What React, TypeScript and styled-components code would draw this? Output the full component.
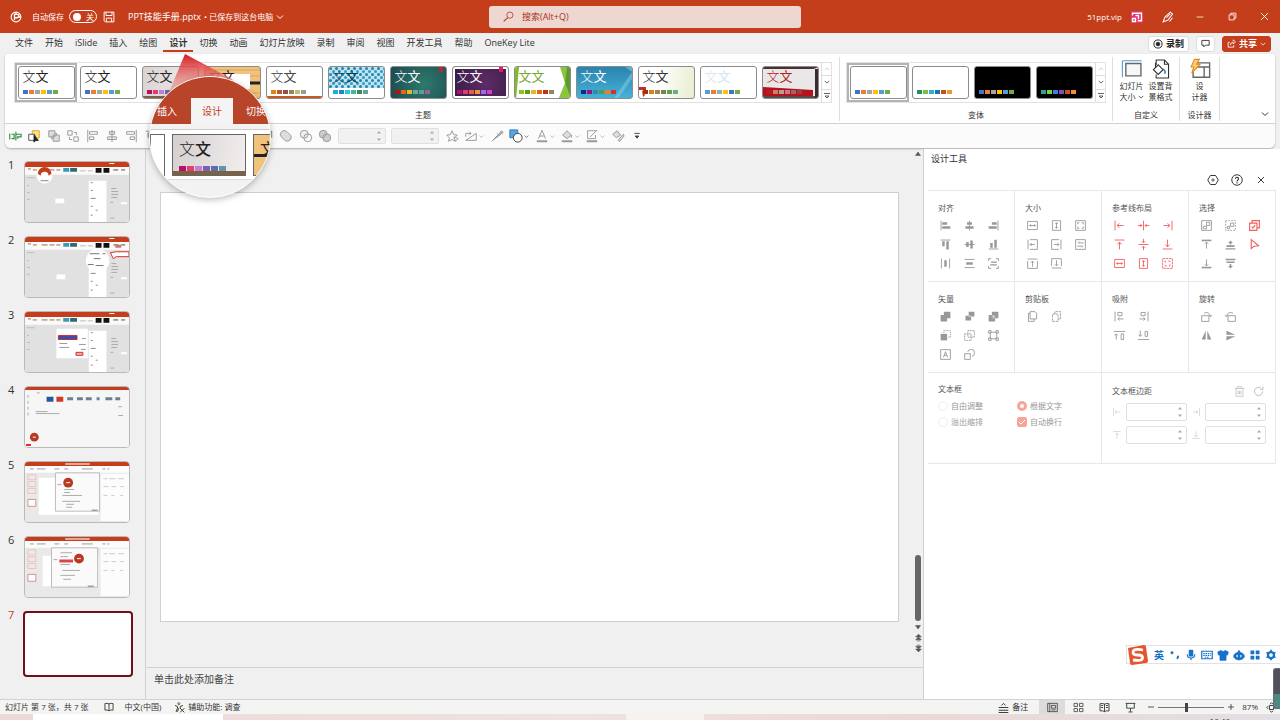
import React, { ReactNode } from "react";
import styled, { createGlobalStyle } from "styled-components";

const brand = "#c43e1c";
const line = "#d2d2d2";

const GlobalStyle = createGlobalStyle`
  * { box-sizing: border-box; }
  body {
    margin: 0;
    background: #f0f0f0;
    color: #333;
    font: 8px/10px "Open Sans", "Noto Sans CJK SC", sans-serif;
  }
  button, input {
    font: inherit;
    color: inherit;
    margin: 0;
    padding: 0;
    border: 0;
    background: none;
  }
  svg { display: block; flex: none; }
`;

const Glyph = ({ size = 14, children }: { size?: number; children: ReactNode }) => (
  <svg width={size} height={size} viewBox="0 0 16 16" fill="none" stroke="currentColor" strokeWidth="1.1" aria-hidden="true">
    {children}
  </svg>
);

const Caret = ({ size = 8 }: { size?: number }) => (
  <Glyph size={size}><path d="M2 5l6 6 6-6" strokeWidth="2" /></Glyph>
);

/* ---------- Window frame ---------- */

const Window = styled.div`
  display: flex;
  flex-direction: column;
  height: 100vh;
  overflow: hidden;
  position: relative;
`;

const TitleBar = styled.header`
  display: grid;
  grid-template-columns: 1fr 312px 1fr;
  align-items: center;
  flex: 0 0 33px;
  padding-left: 10px;
  background: ${brand};
  color: #fff;
`;

const TitleSide = styled.div<{ $end?: boolean }>`
  display: flex;
  align-items: center;
  justify-content: ${(p) => (p.$end ? "flex-end" : "flex-start")};
  height: 33px;
  white-space: nowrap;
`;

const SaveSwitch = styled.label`
  display: flex;
  align-items: center;
  gap: 5px;
  margin: 0 6px 0 10px;
`;

const Toggle = styled.span`
  display: flex;
  align-items: center;
  gap: 5px;
  position: relative;
  width: 28px;
  height: 13px;
  padding-left: 3px;
  border: 1px solid #fff;
  border-radius: 7px;
  &::before {
    content: "";
    width: 8px;
    height: 8px;
    border-radius: 50%;
    background: #fff;
  }
  input {
    position: absolute;
    inset: 0;
    opacity: 0;
  }
`;

const DocName = styled.button`
  display: flex;
  align-items: center;
  gap: 3px;
  margin-left: 13px;
`;

const DocFile = styled.span`
  font-size: 9px;
`;

const SearchBox = styled.label`
  display: flex;
  align-items: center;
  gap: 8px;
  height: 22px;
  padding-left: 14px;
  border-radius: 3px;
  background: #efd7d1;
  color: #a5341b;
  input {
    flex: 1;
    font-size: 9px;
    outline: none;
  }
  input::placeholder { color: #a5341b; opacity: 1; }
`;

const UserName = styled.span`
  margin-right: 9px;
  font-size: 8px;
`;

const FrameButton = styled.button`
  display: grid;
  place-items: center;
  width: 32px;
  height: 33px;
`;

const Avatar = styled.span`
  display: grid;
  place-items: center;
  width: 12px;
  height: 12px;
  margin-right: 9px;
  background: #e2336b;
`;

/* ---------- Tabs ---------- */

const TabRow = styled.nav`
  display: flex;
  align-items: center;
  flex: 0 0 21px;
  padding: 0 9px;
  font-size: 9px;
`;

const Tab = styled.button<{ $active?: boolean }>`
  height: 17px;
  padding: 1px 6px 0;
  font-size: 9px;
  white-space: nowrap;
  font-weight: ${(p) => (p.$active ? 700 : 400)};
  border-bottom: 2px solid ${(p) => (p.$active ? brand : "transparent")};
`;

const TabActions = styled.div`
  display: flex;
  gap: 7px;
  margin-left: auto;
`;

const ActionButton = styled.button<{ $primary?: boolean }>`
  display: flex;
  align-items: center;
  gap: 3px;
  height: 16px;
  padding: 0 4px;
  border: 1px solid ${(p) => (p.$primary ? brand : "#ddd")};
  border-radius: 3px;
  background: ${(p) => (p.$primary ? brand : "#fff")};
  color: ${(p) => (p.$primary ? "#fff" : "#222")};
  font-size: 9px;
  font-weight: 700;
`;

/* ---------- Ribbon ---------- */

const RibbonCard = styled.section`
  flex: none;
  margin: 0 5px;
  border-radius: 4px 4px 6px 6px;
  background: #fff;
  box-shadow: 0 1px 2px rgba(0, 0, 0, 0.3);
  overflow: hidden;
`;

const RibbonGroups = styled.div`
  display: flex;
  height: 70px;
  padding: 3px 0 2px 9px;
  border-bottom: 1px solid ${line};
`;

const Group = styled.div<{ $pad?: number }>`
  display: flex;
  flex-direction: column;
  justify-content: space-between;
  align-items: center;
  padding: 0 ${(p) => p.$pad ?? 6}px;
  border-right: 1px solid #dedede;
`;

const GroupName = styled.span`
  line-height: 12px;
`;

const Gallery = styled.div`
  display: flex;
  height: 41px;
  margin-top: 5px;
  border: 1px solid #e2e2e2;
`;

const ThemeCell = styled.button<{ $selected?: boolean }>`
  display: grid;
  place-items: center;
  width: 62px;
  height: 39px;
  border: 2px solid ${(p) => (p.$selected ? "#b3b3b3" : "transparent")};
`;

const ThemeCard = styled.span<{ $bg: string; $ink: string }>`
  display: flex;
  flex-direction: column;
  justify-content: space-between;
  align-items: flex-start;
  position: relative;
  width: 57px;
  height: 33px;
  padding: 2px 0 4px 4px;
  border: 1px solid #8c8c8c;
  border-radius: 3px;
  overflow: hidden;
  background: ${(p) => p.$bg};
  color: ${(p) => p.$ink};
  font-size: 13px;
  line-height: 15px;
  font-weight: 300;
  svg {
    position: absolute;
    inset: 0;
  }
`;

const Sample = styled.span`
  position: relative;
  height: 15px;
`;

const Swatches = styled.span`
  display: flex;
  gap: 1px;
  position: relative;
  i {
    width: 5px;
    height: 4px;
  }
`;

const Pager = styled.div`
  display: flex;
  flex-direction: column;
  width: 10px;
  border-left: 1px solid #ddd;
  button {
    flex: 1;
    display: grid;
    place-items: center;
  }
  button + button { border-top: 1px solid #ddd; }
`;

const BigButton = styled.button`
  display: flex;
  flex-direction: column;
  align-items: center;
  gap: 1px;
  width: 29px;
  span {
    display: flex;
    align-items: center;
    gap: 2px;
  }
`;

const BigRow = styled.div`
  display: flex;
  padding-top: 1px;
`;

const Collapse = styled.button`
  margin: auto 6px 3px auto;
`;

const QuickBar = styled.div`
  display: flex;
  align-items: center;
  height: 24px;
  padding-left: 3px;
  background: #fbfbfb;
  color: #9a9a9a;
`;

const QuickGroup = styled.div<{ $width: number }>`
  display: flex;
  align-items: center;
  justify-content: space-between;
  width: ${(p) => p.$width}px;
`;

const QuickButton = styled.button<{ $dark?: boolean }>`
  display: flex;
  align-items: center;
  gap: 1px;
  color: ${(p) => (p.$dark ? "#444" : "inherit")};
`;

const SpinBox = styled.span<{ $width: number; $height: number; $fill?: string }>`
  display: flex;
  align-items: center;
  width: ${(p) => p.$width}px;
  height: ${(p) => p.$height}px;
  padding-right: 3px;
  border: 1px solid #e0e0e0;
  border-radius: 2px;
  background: ${(p) => p.$fill ?? "#fff"};
  color: #aaa;
  input {
    flex: 1;
    min-width: 0;
  }
`;

const QuickSpins = styled.div`
  display: flex;
  gap: 5px;
  margin: 0 6px;
`;

/* ---------- Lens over the ribbon ---------- */

const Pointer = styled.svg`
  position: absolute;
  left: 160px;
  top: 54px;
`;

const Lens = styled.div`
  position: absolute;
  left: 149px;
  top: 76px;
  width: 122px;
  height: 122px;
  border: 1px solid #fff;
  border-radius: 50%;
  background: #f2f2f2;
  overflow: hidden;
  box-shadow: 0 2px 6px rgba(0, 0, 0, 0.25);
`;

const LensTabs = styled.div`
  display: flex;
  align-items: flex-end;
  height: 47px;
  background: #b8442a;
  color: #fff;
  font-size: 10px;
  line-height: 26px;
  white-space: nowrap;
  span {
    flex: none;
    width: 41px;
    text-align: center;
  }
  span:first-child { padding-right: 7px; }
  span:nth-child(2) { width: 42px; background: #f4f4f4; color: ${brand}; }
  span:last-child { padding-left: 5px; }
`;

const LensGallery = styled.div`
  display: flex;
  gap: 7px;
  height: 51px;
  margin-top: 5px;
  padding-top: 4px;
  border-top: 1px solid #ccc;
  border-bottom: 1px solid #ddd;
  background: #fff;
`;

const LensCard = styled.div<{ $width: number; $bg: string }>`
  display: flex;
  flex-direction: column;
  justify-content: space-between;
  flex: none;
  width: ${(p) => p.$width}px;
  height: 42px;
  padding: 4px 0 0 6px;
  border: 1px solid #666;
  background: ${(p) => p.$bg};
  color: #222;
  font-size: 16px;
  line-height: 20px;
  font-weight: 300;
  overflow: hidden;
`;

const LensSwatches = styled.div`
  display: flex;
  gap: 1px;
  margin-bottom: 4px;
  i { width: 7px; height: 5px; }
`;

/* ---------- Workspace ---------- */

const Workspace = styled.main`
  display: flex;
  flex: 1;
  min-height: 0;
  margin-top: 1px;
`;

const Thumbs = styled.aside`
  flex: 0 0 146px;
  padding: 12px 0 0 8px;
  border-right: 1px solid ${line};
  ol {
    display: flex;
    flex-direction: column;
    gap: 13px;
    margin: 0;
    padding: 0;
    list-style: none;
  }
`;

const ThumbItem = styled.li<{ $selected?: boolean }>`
  display: flex;
  height: 62px;
  font-size: 11px;
  color: ${(p) => (p.$selected ? brand : "#333")};
  > span { width: 16px; line-height: 7px; }
`;

const ThumbFrame = styled.button<{ $selected?: boolean }>`
  width: ${(p) => (p.$selected ? 110 : 106)}px;
  height: ${(p) => (p.$selected ? 66 : 62)}px;
  margin-left: ${(p) => (p.$selected ? -1 : 0)}px;
  border: ${(p) => (p.$selected ? "2px solid #711019" : "1px solid #b9b9b9")};
  border-radius: 4px;
  background: #fff;
  overflow: hidden;
`;

const Editor = styled.section`
  display: flex;
  flex-direction: column;
  flex: 1;
  min-width: 0;
`;

const Stage = styled.div`
  display: flex;
  flex: 1;
  min-height: 0;
`;

const Slide = styled.div`
  flex: 1;
  margin: 43px 14px 45px;
  border: 1px solid #cfcfcf;
  background: #fff;
`;

const ScrollTrack = styled.div`
  display: flex;
  flex-direction: column;
  align-items: center;
  justify-content: space-between;
  width: 10px;
  padding: 1px 0 14px;
  color: #555;
  > div {
    display: flex;
    flex-direction: column;
    align-items: center;
    gap: 2px;
  }
  button { display: block; }
`;

const ScrollThumb = styled.i`
  width: 6px;
  height: 66px;
  border-radius: 3px;
  background: #666;
`;

const Notes = styled.div`
  flex: 0 0 32px;
  padding: 4px 8px;
  border-top: 1px solid ${line};
  font-size: 10px;
  line-height: 14px;
  color: #444;
`;

/* ---------- Design pane ---------- */

const Pane = styled.aside`
  flex: 0 0 357px;
  padding: 0 4px;
  border-left: 1px solid ${line};
  background: #fff;
`;

const PaneTitle = styled.h2`
  margin: 0;
  padding: 4px 3px;
  font-size: 9px;
  line-height: 12px;
  font-weight: 400;
`;

const PaneActions = styled.div`
  display: flex;
  justify-content: flex-end;
  align-items: center;
  gap: 12px;
  height: 21px;
  padding-right: 9px;
  color: #333;
`;

const ToolGrid = styled.div`
  display: grid;
  grid-template-columns: repeat(4, 1fr);
  grid-auto-rows: 91px;
  border-top: 1px solid #e8e8e8;
`;

const ToolCell = styled.section<{ $wide?: boolean }>`
  grid-column: span ${(p) => (p.$wide ? 2 : 1)};
  padding: ${(p) => (p.$wide ? 10 : 11)}px 0 0 10px;
  border-right: 1px solid #e8e8e8;
  border-bottom: 1px solid #e8e8e8;
  h3 {
    margin: 0;
    font-size: 8px;
    line-height: 12px;
    font-weight: 400;
    color: #555;
  }
`;

const IconGrid = styled.div`
  display: grid;
  grid-template-columns: repeat(3, 14px);
  gap: 7px 10px;
  margin-top: 5px;
`;

const ToolButton = styled.button<{ $tone: string }>`
  display: grid;
  place-items: center;
  width: 14px;
  height: 12px;
  color: ${(p) => p.$tone};
`;

const Options = styled.div`
  display: grid;
  grid-template-columns: 79px 79px;
  gap: 6px 0;
  margin-top: 6px;
  label {
    display: flex;
    align-items: center;
    gap: 3px;
    color: #999;
  }
`;

const Choice = styled.input<{ $square?: boolean }>`
  appearance: none;
  width: 10px;
  height: 10px;
  border: 1px solid #eee;
  border-radius: ${(p) => (p.$square ? 2 : 5)}px;
  &[type="radio"]:checked { border: 3px solid #f7a59b; }
  &[type="checkbox"]:checked {
    border-color: #f7a59b;
    background: #f7a59b url("data:image/svg+xml,%3Csvg xmlns='http://www.w3.org/2000/svg' viewBox='0 0 8 8'%3E%3Cpath d='M1 4l2 2 4-4' fill='none' stroke='white'/%3E%3C/svg%3E") center / 8px no-repeat;
  }
`;

const MarginHead = styled.div`
  display: flex;
  align-items: center;
  gap: 8px;
  padding: 2px 11px 0 0;
  color: #bbb;
  h3 { margin-right: auto; }
`;

const Margins = styled.div`
  display: grid;
  grid-template-columns: 61px 61px;
  gap: 5px 18px;
  margin: 6px 0 0 14px;
  label {
    display: flex;
    align-items: center;
    gap: 4px;
    margin-left: -14px;
    color: #ccc;
  }
`;

/* ---------- Status bar ---------- */

const StatusBar = styled.footer`
  display: flex;
  align-items: center;
  flex: 0 0 15px;
  padding-left: 5px;
  border-top: 1px solid ${line};
  background: #f4f4f3;
  white-space: nowrap;
`;

const StatusItem = styled.button<{ $gap: number }>`
  display: flex;
  align-items: center;
  gap: 3px;
  margin-left: ${(p) => p.$gap}px;
`;

const StatusTools = styled.div`
  display: flex;
  align-items: center;
  margin-left: auto;
  padding-right: 3px;
`;

const ViewButton = styled.button<{ $active?: boolean }>`
  display: grid;
  place-items: center;
  width: 26px;
  height: 14px;
  margin-left: ${(p) => (p.$active ? 11 : 0)}px;
  background: ${(p) => (p.$active ? "#dcdcdc" : "none")};
`;

const Zoom = styled.input`
  appearance: none;
  width: 66px;
  height: 10px;
  margin: 0 3px;
  background: linear-gradient(#777, #777) center / 100% 1px no-repeat;
  &::-webkit-slider-thumb {
    appearance: none;
    width: 3px;
    height: 9px;
    background: #444;
  }
`;

const Desktop = styled.div`
  display: flex;
  flex: 0 0 6px;
  padding-left: 33px;
  overflow: hidden;
  background: linear-gradient(90deg, #ecd9d8, #efe2e0 45%, #ecd8d6 70%, #e2dfe2);
`;

const DesktopBand = styled.i<{ $width: number; $tone: string; $gap?: number }>`
  width: ${(p) => p.$width}px;
  margin-right: ${(p) => p.$gap ?? 0}px;
  background: ${(p) => p.$tone};
`;

const Clock = styled.time`
  margin-left: auto;
  padding: 2px 50px 0 0;
  color: #222;
`;

const ImeBar = styled.div`
  display: flex;
  align-items: center;
  gap: 4px;
  position: absolute;
  right: 0;
  bottom: 56px;
  height: 19px;
  padding: 0 3px 0 0;
  background: #fff;
  border: 1px solid #e2e2e2;
  border-right: 0;
  color: #1571c9;
  font-size: 10px;
  font-weight: 700;
  button {
    display: grid;
    place-items: center;
    width: 12px;
  }
`;

const SideWidget = styled.div`
  position: absolute;
  right: 0;
  bottom: 11px;
  width: 7px;
  height: 41px;
  border: 1px solid #6a6a78;
  border-right: 0;
  border-radius: 3px 0 0 3px;
  background: linear-gradient(#50505e 65%, #4f8a80 65%);
`;

/* ---------- Data ---------- */

type Theme = { bg: string; ink: string; colors: string[]; art?: ReactNode; bold?: boolean };

const office = ["#4472c4", "#ed7d31", "#a5a5a5", "#ffc000", "#5b9bd5", "#70ad47"];

const themes: Theme[] = [
  { bg: "#fff", ink: "#222", colors: office },
  { bg: "#fff", ink: "#222", colors: office },
  {
    bg: "linear-gradient(100deg,#d9d3d2,#f1eeee)", ink: "#222",
    colors: ["#b31166", "#e33d6f", "#c77cd8", "#7a5fb5", "#5a6fb0", "#5d97a9"],
    art: <path d="M0 29H57V33H0Z" fill="#806044" />,
  },
  {
    bg: "#f0c27c", ink: "#222", colors: ["#e8a33d", "#c76b2a", "#8a8a4a"],
    art: <><path d="M0 3h57M0 9h57M0 26h57" stroke="#dba75b" /><path d="M9 7H45V22H9Z" fill="#fff" /><path d="M2 17h8M45 16h12" stroke="#222" strokeWidth="3" /></>,
  },
  {
    bg: "#fff", ink: "#444", colors: ["#e48312", "#bd582c", "#865640", "#9b8357", "#c2bc80", "#94a088"],
    art: <path d="M0 29H57V31H0Z" fill="#c55a2b" />,
  },
  {
    bg: "#fff", ink: "#143c52", colors: ["#1cade4", "#2683c6", "#27ced7", "#42ba97", "#3e8853", "#62a39f"],
    art: <>
      <defs><pattern id="dots" width="6" height="6" patternUnits="userSpaceOnUse"><rect width="6" height="6" fill="#bfe3f1" /><circle cx="1.500" cy="1.500" r="1.500" fill="#1f86ac" /><circle cx="4.500" cy="4.500" r="1.500" fill="#2e9cc4" /></pattern></defs>
      <path d="M0 0H57V21H0Z" fill="url(#dots)" />
    </>,
  },
  {
    bg: "radial-gradient(circle at 60% 55%,#2d7a6c,#1c4a50)", ink: "#fff",
    colors: ["#b01513", "#ea6312", "#e6b729", "#6aac90", "#5f9c9d", "#9e5e9b"],
    art: <path d="M48 0H52V5H48Z" fill="#c5202b" />,
  },
  {
    bg: "radial-gradient(circle at 60% 55%,#5e2c66,#341a44)", ink: "#fff",
    colors: ["#b31166", "#e33d6f", "#e45f3c", "#e9943a", "#9b6bf2", "#d53dd0"],
    art: <><path d="M0 0H55V31H0Z" fill="none" stroke="#fff" strokeWidth="4" /><path d="M46 0H50V5H46Z" fill="#e8175d" /></>,
  },
  {
    bg: "#fff", ink: "#76a82c", bold: true, colors: ["#90c226", "#54a021", "#e6b91e", "#e76618", "#c42f1a", "#918655"],
    art: <><path d="M0 0L4 0L1 33H0Z" fill="#82bb2c" /><path d="M45 0H57V33H43L50 16Z" fill="#8cc43f" /><path d="M57 0V33L50 16L52 0Z" fill="#5d9a2f" /></>,
  },
  {
    bg: "linear-gradient(#2a83b0,#45b3d6)", ink: "#fff", colors: ["#052f8a", "#a50e82", "#2a8bb5", "#4e9a5a", "#e88120", "#d6302b"],
    art: <><path d="M57 2L36 33H40L57 9Z" fill="#8bd0e6" opacity=".5" /><path d="M48 0L57 6V0Z" fill="#9bd9ea" opacity=".5" /></>,
  },
  {
    bg: "linear-gradient(100deg,#fff 35%,#e9edcf)", ink: "#333", colors: ["#a53010", "#de7e18", "#9f8351", "#728653", "#6b9a54", "#6aac90"],
    art: <path d="M0 20H7V23H0ZM3 23L6 28 4 30Z" fill="#c0301c" />,
  },
  { bg: "#fff", ink: "#cfe4f2", colors: ["#5b9bd5", "#ed7d31", "#8fb2a8", "#ffc000", "#4472c4", "#70ad47"] },
  {
    bg: "#e9e7e8", ink: "#b31f24", colors: ["#b31f24", "#c9806a", "#b8a08e", "#c27a89", "#9f6470", "#a23c3c"],
    art: <><path d="M52 2H57V33H52Z" fill="#3b2b2b" /><path d="M0 20L50 23V29H0Z" fill="#b5121b" /><path d="M0 29H52V33H0Z" fill="#5c4a48" /><path d="M0 0H57L50 2H0Z" fill="#4a3030" /></>,
  },
];

const variants: Theme[] = [
  { bg: "#fff", ink: "#fff", colors: office },
  { bg: "#fff", ink: "#fff", colors: ["#1f8f6b", "#7bc043", "#2db3c7", "#1f6fae", "#c0521c", "#f0953a"] },
  { bg: "#000", ink: "#000", colors: office },
  { bg: "#000", ink: "#000", colors: ["#2fa38c", "#74d13f", "#3f7fd6", "#7a4fc0", "#cf4a26", "#f0903a"] },
];

const ThemeThumb = ({ theme, selected, sample }: { theme: Theme; selected?: boolean; sample?: boolean }) => (
  <ThemeCell $selected={selected}>
    <ThemeCard $bg={theme.bg} $ink={theme.ink}>
      {theme.art && <svg width="57" height="33" viewBox="0 0 57 33">{theme.art}</svg>}
      <Sample>{sample && (theme.bold ? <b>文文</b> : <>文<span style={{ fontWeight: 400 }}>文</span></>)}</Sample>
      <Swatches>{theme.colors.map((c) => <i key={c} style={{ background: c }} />)}</Swatches>
    </ThemeCard>
  </ThemeCell>
);

const GalleryPager = () => (
  <Pager>
    <button aria-label="上一行"><Glyph size={6}><path d="M3 10l5-5 5 5" stroke="#bbb" strokeWidth="2" /></Glyph></button>
    <button aria-label="下一行"><Caret size={6} /></button>
    <button aria-label="更多"><Glyph size={8}><path d="M2 3h12M4 8h8l-4 4z" strokeWidth="1.500" /></Glyph></button>
  </Pager>
);

const Spin = ({ width, height, fill, label }: { width: number; height: number; fill?: string; label: string }) => (
  <SpinBox $width={width} $height={height} $fill={fill}>
    <input type="text" aria-label={label} disabled />
    <svg width="6" height="12" viewBox="0 0 6 12" fill="currentColor"><path d="M1 3.500L3 1 5 3.500zM1 8.500L3 11 5 8.500z" /></svg>
  </SpinBox>
);

/* Tool glyphs, each on a 16 unit square */
const F = "currentColor";
const box = <path d="M2 2H14V14H2Z" />;
const g: Record<string, ReactNode> = {
  left: <><path d="M2.500 2V14" /><path d="M4 4H10V7H4ZM4 9H14V12H4Z" fill={F} stroke="none" /></>,
  center: <path d="M5 4H11V7H5ZM3 9H13V12H3ZM7.500 2H8.500V14H7.500Z" fill={F} stroke="none" />,
  right: <><path d="M13.500 2V14" /><path d="M6 4H12V7H6ZM2 9H12V12H2Z" fill={F} stroke="none" /></>,
  top: <><path d="M2 2.500H14" /><path d="M4 4H7V10H4ZM9 4H12V14H9Z" fill={F} stroke="none" /></>,
  middle: <path d="M4 5H7V11H4ZM9 3H12V13H9ZM2 7.500H14V8.500H2Z" fill={F} stroke="none" />,
  bottom: <><path d="M2 13.500H14" /><path d="M4 6H7V12H4ZM9 2H12V12H9Z" fill={F} stroke="none" /></>,
  distH: <><path d="M3 2V14M13 2V14" /><path d="M6.500 4H9.500V12H6.500Z" fill={F} stroke="none" /></>,
  distV: <><path d="M2 3H14M2 13H14" /><path d="M4 6.500H12V9.500H4Z" fill={F} stroke="none" /></>,
  distB: <><path d="M2 5V2H5M11 2H14V5M14 11V14H11M5 14H2V11" /><path d="M5 5.500H12V7H5ZM4 9H12V10.500H4Z" fill={F} stroke="none" /></>,
  wide: <path d="M2 3H14V13H2ZM4.500 8H11.500M6 6.500L4.500 8 6 9.500M10 6.500L11.500 8 10 9.500" />,
  tall: <path d="M3 2H13V14H3ZM8 4.500V11.500M6.500 6L8 4.500 9.500 6M6.500 10L8 11.500 9.500 10" />,
  full: <>{box}<path d="M4.500 6.500V4.500H6.500M9.500 4.500H11.500V6.500M11.500 9.500V11.500H9.500M6.500 11.500H4.500V9.500" /></>,
  growL: <path d="M5 2H14V14H5M2.500 2V14M5 8H11M7 6L5 8 7 10" />,
  growR: <path d="M11 2H2V14H11M13.500 2V14M5 8H11M9 6L11 8 9 10" />,
  swap: <>{box}<path d="M12 6H5L6.500 4.500M4 10H11L9.500 11.500" /></>,
  growT: <path d="M2 5V14H14V5M2 2.500H14M8 5V12M6 7L8 5 10 7" />,
  growB: <path d="M2 11V2H14V11M2 13.500H14M8 4V11M6 9L8 11 10 9" />,
  gl: <path d="M2.500 2V14M5 8H13M8 5.500L5 8 8 10.500" />,
  gc: <path d="M8 2V14M1 8H6M10 8H15M4 6L6 8 4 10M12 6L10 8 12 10" />,
  gr: <path d="M13.500 2V14M3 8H11M8 5.500L11 8 8 10.500" />,
  gt: <path d="M2 2.500H14M8 5V14M5.500 8L8 5 10.500 8" />,
  gm: <path d="M2 8H14M8 1V6M8 10V15M6 4L8 6 10 4M6 12L8 10 10 12" />,
  gb: <path d="M2 13.500H14M8 2V11M5.500 8L8 11 10.500 8" />,
  corners: <path d="M2 2H14V14H2ZM5 7V5H7M9 5H11V7M11 9V11H9M7 11H5V9" strokeDasharray="3 1" />,
  selA: <>{box}<path d="M8 4H12V8H8ZM4 9H8V12H4Z" /></>,
  selB: <><path d="M2 2H14V14H2Z" strokeDasharray="2 1.500" /><path d="M8 5H12V9H8ZM4 9H7V12H4Z" /></>,
  selC: <path d="M2 5H11V14H2ZM5 5V2H14V11H11M4.500 9.500L6 11 9 7.500" strokeWidth="1.400" />,
  front: <><path d="M2 3H14" strokeWidth="2" /><path d="M8 5V13M6 7L8 5 10 7" /></>,
  up: <path d="M3 9H13V11H3ZM2 12.500H14V14H2ZM8 3L11 6H9V8H7V6H5Z" fill={F} stroke="none" />,
  cursor: <path d="M4 2V13L7 10.500 13 9.500Z" strokeWidth="1.400" />,
  back: <><path d="M2 13H14" strokeWidth="2" /><path d="M8 3V11M6 9L8 11 10 9" /></>,
  down: <path d="M2 2H14V4H2ZM3 5.500H13V7.500H3ZM8 14L11 11H9V8.500H7V11H5Z" fill={F} stroke="none" />,
  union: <path d="M6 2H14V10H10V14H2V6H6Z" fill={F} stroke="none" />,
  combine: <path d="M7 2H14V8H10V13H3V7H7ZM7 7H10V8H7Z" fill={F} stroke="none" fillRule="evenodd" />,
  intersect: <><path d="M6 2H14V10H6ZM2 6H10V14H2Z" fill={F} fillRule="evenodd" stroke="none" /><path d="M6.500 6.500H9.500V9.500H6.500Z" /></>,
  subtract: <><path d="M2 6H10V14H2Z" fill={F} stroke="none" /><path d="M6 5V2H14V10H11" strokeDasharray="1.500 1" /></>,
  cross: <path d="M6 2H14V10H6ZM2 6H10V14H2Z" strokeDasharray="2 .8" />,
  nodes: <path d="M4 4H12V12H4ZM2 2H5V5H2ZM11 2H14V5H11ZM2 11H5V14H2ZM11 11H14V14H11Z" />,
  letter: <>{box}<path d="M5.500 11.500L8 4.500 10.500 11.500M6.500 9H9.500" /></>,
  shapes: <path d="M2 7H9V14H2ZM6 5V4.500A3 3 0 0 1 9 2H11A3 3 0 0 1 14 5V7A3 3 0 0 1 11 10" />,
  copy: <path d="M5 2H11L13 4V11H5ZM5 4H3V14H10V11" />,
  paste: <path d="M3 5H10V14H3ZM6 5V2H13V11H10" strokeDasharray="3 1" />,
  snapL: <path d="M2.500 2V14M6 3H11V7H6ZM13 11H6L8 9M6 11L8 13" />,
  snapR: <path d="M13.500 2V14M5 3H10V7H5ZM3 11H10L8 9M10 11L8 13" />,
  snapT: <path d="M1 3H15M4 13V6L2 8M4 6L6 8M10 6H13V13H10Z" />,
  snapB: <path d="M1 13H15M4 2V9L2 7M4 9L6 7M10 3H13V9H10Z" />,
  rotR: <path d="M2 7H11V14H2ZM5 4Q11 1 13 8M11 6.500L13 8 15 6.500" />,
  rotL: <path d="M5 7H14V14H5ZM11 4Q5 1 3 8M1 6.500L3 8 5 6.500" />,
  flipH: <path d="M7 2V13H2ZM9 2V13H14Z" fill={F} stroke="none" />,
  flipV: <path d="M3 2L14 7H3ZM3 9H14L3 14Z" fill={F} stroke="none" />,
};

const gray = "#989898";
const red = "#f0605e";

const groups: { title: string; tone: string; icons: string[]; reds?: string[] }[] = [
  { title: "对齐", tone: gray, icons: ["left", "center", "right", "top", "middle", "bottom", "distH", "distV", "distB"] },
  { title: "大小", tone: gray, icons: ["wide", "tall", "full", "growL", "growR", "swap", "growT", "growB"] },
  { title: "参考线布局", tone: red, icons: ["gl", "gc", "gr", "gt", "gm", "gb", "wide", "tall", "corners"] },
  { title: "选择", tone: gray, icons: ["selA", "selB", "selC", "front", "up", "cursor", "back", "down"], reds: ["selC", "cursor"] },
  { title: "矢量", tone: gray, icons: ["union", "combine", "intersect", "subtract", "cross", "nodes", "letter", "shapes"] },
  { title: "剪贴板", tone: gray, icons: ["copy", "paste"] },
  { title: "吸附", tone: gray, icons: ["snapL", "snapR", "", "snapT", "snapB"] },
  { title: "旋转", tone: gray, icons: ["rotR", "rotL", "", "flipH", "flipV"] },
];

/* Small drawings of the slides' own contents */
const wideChips = (
  <>
    <path d="M3 7h3M8 8h4M17 8h6M25 8h5M32 8h4" stroke="#c9a79a" strokeWidth="2" />
    <path d="M39 6H45V10H39Z" fill="#3b97b8" /><path d="M46 6H53V10H46Z" fill="#2d6b70" />
    <path d="M56 9h6M64 9h5" stroke="#bbb" /><path d="M72 6H78V11H72ZM80 6H86V11H80Z" fill="#111" />
    <path d="M90 8h5M98 8h4" stroke="#999" strokeWidth="2" />
  </>
);
const shell = (
  <>
    <path d="M0 0H106V62H0Z" fill="#e1e1e1" /><path d="M0 4H106V13H0Z" fill="#fafafa" />
    <path d="M0 0H106V5H0Z" fill={brand} /><path d="M86 1H91V2H86Z" fill="#fff" />
    <path d="M2 16h8M2 24h2M2 31h3M2 38h3" stroke="#bbb" />
    <path d="M65 19H83V62H65Z" fill="#fff" />
    <path d="M67 21h2M67 29h2M67 37h5M67 45h2M72 49h2M67 54h2" stroke="#888" />
    <path d="M88 27h5M88 30h7M88 33h7M88 36h6M87 41h3M87 57h4" stroke="#aaa" />
    <path d="M98 41H104V43H98Z" fill="#fff" />
    {wideChips}
  </>
);
const dialogShell = (
  <>
    <path d="M0 0H106V62H0Z" fill="#e9e9e9" /><path d="M0 4H106V11H0ZM77 12H106V60H77Z" fill="#fcfcfc" />
    <path d="M0 0H106V4H0Z" fill={brand} /><path d="M41 1H66V3H41Z" fill="#e6a797" />
    <path d="M5 7h4M12 7h9M30 7h5M40 7h4M58 7h11M79 7h3M84 7h2" stroke="#c5c5c5" strokeWidth="2" />
    <path d="M3 13H11V18H3ZM3 20H11V25H3ZM3 27H11V32H3Z" fill="#f3e6e3" stroke="#d1aaa2" strokeWidth=".5" />
    <path d="M3 38H11V45H3Z" fill="#fff" stroke="#c2564e" strokeWidth=".6" />
    <path d="M80 17h4M86 17h6M95 17h6M80 25h5M88 25h5M97 25h4M80 34h4M88 34h3M97 34h3" stroke="#ccc" />
  </>
);
const slides: ReactNode[] = [
  <>{shell}<path d="M31 37H40V42H31Z" fill="#fff" /><circle cx="20" cy="14" r="8" fill="#fff" /><path d="M13 12A7 7 0 0 1 27 12L24 14A4 4 0 0 0 16 14Z" fill={brand} /><path d="M16 19h8" stroke="#888" /></>,
  <>{shell}<path d="M32 38H41V43H32Z" fill="#fff" /><circle cx="74" cy="24" r="12" fill="#fff" /><path d="M66 17h10M79 17h3M70 22h7M64 28h6M72 29h8" stroke="#777" /><path d="M93 15H106V20H93L90 22 87 16Z" fill="#fff" stroke="#e02a2a" /><path d="M92 8H98V11H92Z" fill="#c76" /></>,
  <>{shell}<path d="M32 17H64V47H32Z" fill="#fff" /><path d="M34 24H53V28H34Z" fill="#2d51b5" stroke="#d22" /><path d="M35 32h8M35 36h10M58 27h4M55 33h7M57 38h5" stroke="#999" /><path d="M52 41H59V44H52Z" fill="#e9b9b9" stroke="#d22" /></>,
  <><path d="M0 0H106V62H0Z" fill="#f6f6f6" /><path d="M0 0H106V3H0Z" fill={brand} /><path d="M12 6h3M3 8v3M3 14v3M3 20v3M3 26v3" stroke="#aaa" /><path d="M22 10H29V15H22Z" fill="#2458a0" /><path d="M32 10H39V15H32Z" fill="#d13a20" /><path d="M43 12h6M53 12h6M62 12h6M73 12h3M82 12h7M92 12h5" stroke="#698098" strokeWidth="3" /><path d="M11 25h12M11 27h24M95 20h4M95 29h5" stroke="#aaa" /><circle cx="9.500" cy="51" r="4.500" fill="#b93a22" /><path d="M8 51h3" stroke="#fff" /><path d="M1 58H6V60H1Z" fill="#e22" /></>,
  <>{dialogShell}<path d="M14 16H75V54H14Z" fill="#fff" /><path d="M31 11H76V50H31Z" fill="#fafafa" stroke="#bbb" /><path d="M40 28h10M40 31h6M38 34h20M38 40h18M42 43h8M42 46h6M33 23h4" stroke="#aaa" /><circle cx="44" cy="21" r="5" fill="#b93a22" /><path d="M42 21h4" stroke="#fff" /><path d="M68 49h6" stroke="#777" /></>,
  <>{dialogShell}<path d="M18 19H75V50H18Z" fill="#fff" /><path d="M27 11H74V51H27Z" fill="#fafafa" stroke="#bbb" /><path d="M36 16h12M36 20h8M36 28h10M38 34h18M36 39h15M39 43h8M29 23h4" stroke="#aaa" /><path d="M35 23H49V26H35Z" fill="#d8484a" /><circle cx="55" cy="22" r="5" fill="#b93a22" /><path d="M53 22h4" stroke="#fff" /><path d="M64 50h6" stroke="#777" /></>,
  null,
];

/* Quick access glyphs */
const quick: ReactNode[] = [
  <path d="M2 5V12M4 6H7V11H4M9 3V13M9 6H15V9H11V11" stroke="#2f8f46" strokeWidth="1.300" />,
  <><path d="M6 2H14V10H6Z" fill="#ffe08a" stroke="#e0a41c" /><path d="M2 6H9V13H2Z" fill="#fff" stroke="#555" /><path d="M8 7V15L10 13 13 13Z" fill="#222" stroke="#222" /></>,
  <path d="M2 2H9V9H2ZM7 7H14V14H7ZM5 9V11H7M9 5H11V7" fill="#ddd" />,
  <path d="M2 2H7V7H2ZM9 9H14V14H9ZM9 4H12V7M4 9V12H7" />,
  <path d="M2 1V15M4 3H13V6H4ZM4 9H9V12H4Z" />,
  <path d="M8 1V15M3 9H13V12H3ZM5 3H11V6H5Z" fill="#eee" />,
  <path d="M14 1V15M3 3H12V6H3ZM7 9H12V12H7Z" />,
  g.top, g.middle, g.bottom, g.distH, g.distV, g.swap, g.union,
  <path d="M2.500 3.500A4.500 4.500 0 0 1 9 3L13.500 7.500A4.500 4.500 0 0 1 7.500 13.500L3 9.500A4.500 4.500 0 0 1 2.500 3.500Z" fill="#ddd" />,
  <><circle cx="6" cy="6" r="4.500" fill="#eee" /><circle cx="10" cy="10" r="4.500" /></>,
  <><circle cx="6" cy="6" r="4.500" fill="#ccc" /><circle cx="10" cy="10" r="4.500" fill="#ccc" /><path d="M6 10L10 6" /></>,
];

const quickB: { art: ReactNode; caret?: boolean; dark?: boolean }[] = [
  { art: <><path d="M8 2L10 6.500 14 7 11 10 12 14 8 12 4 14 5 10 2 7 6 6.500Z" /><path d="M10 9l5 2-3 3z" fill="#fff" /></> },
  { art: <path d="M2 13H14V5ZM2 5H8M6 3L8 5 6 7M2 5V9" />, caret: true },
  { art: <path d="M2 14L9 7M8 5L11 8M3 13L10 6 13 2 15 4 11 7Z" fill="#bbb" /> },
  { art: <><path d="M1 1H10V10H1Z" fill="#5aa5e0" stroke="#2b7cc0" /><circle cx="10" cy="10" r="5" fill="#fff" stroke="#444" /></>, caret: true, dark: true },
  { art: <><path d="M4 11L8 1.500 12 11M5.500 8H10.500" /><path d="M2 14H14" strokeWidth="2.500" /></>, caret: true },
  { art: <><path d="M8 2L13 7 8 11 3 7ZM13 7V10" fill="#ddd" /><path d="M2 14H14" strokeWidth="2.500" /></>, caret: true },
  { art: <><path d="M3 2H13M3 2V11H12V7M6 9L14 1" /><path d="M2 14H14" strokeWidth="2.500" /></>, caret: true },
  { art: <path d="M2 6L7 2 11 7 6 10ZM8 13L14 6 15 8 10 14Z" fill="#ddd" /> },
  { art: <path d="M5 5H11M6 8H10L8 10.500Z" fill="#444" stroke="#444" /> },
];

const tabs = ["文件", "开始", "iSlide", "插入", "绘图", "设计", "切换", "动画", "幻灯片放映", "录制", "审阅", "视图", "开发工具", "帮助", "OneKey Lite"];

export default function App() {
  return (
    <Window>
      <GlobalStyle />
      <TitleBar>
        <TitleSide>
          <Glyph size={12}><circle cx="8" cy="8" r="6.500" strokeWidth="1.500" /><path d="M6 12V4.500H9.500A2 2 0 0 1 9.500 9H6M8 1.500V4M10 8H14.500" strokeWidth="1.800" /></Glyph>
          <SaveSwitch>
            自动保存
            <Toggle><input type="checkbox" />关</Toggle>
          </SaveSwitch>
          <button aria-label="保存"><Glyph size={12}><path d="M1.500 1.500H14.500V14.500H3L1.500 13ZM4 1.500V6H12V1.500M4.500 14.500V9.500H11.500V14.500" strokeWidth="1.300" /></Glyph></button>
          <DocName>
            <DocFile>PPT技能手册.pptx</DocFile>
            <span>• 已保存到这台电脑</span>
            <Caret />
          </DocName>
        </TitleSide>
        <SearchBox>
          <Glyph size={11}><circle cx="10" cy="6" r="4.500" /><path d="M7 9.500L1 15" strokeWidth="1.500" /></Glyph>
          <input type="search" placeholder="搜索(Alt+Q)" aria-label="搜索" />
        </SearchBox>
        <TitleSide $end>
          <UserName>51ppt.vip</UserName>
          <Avatar><Glyph size={12}><path d="M2 6V3H14V13H9M6 6H10V11M2 10H6V14H2Z" stroke="#fff" strokeWidth="1.800" /></Glyph></Avatar>
          <FrameButton aria-label="笔"><Glyph size={12}><path d="M1.500 14.500L4 8 11 1.500 14 4 8 12ZM6 9L11 4M10 14L14 9" strokeWidth="1.400" /></Glyph></FrameButton>
          <FrameButton aria-label="最小化"><Glyph size={8}><path d="M1 8H15" strokeWidth="1.500" /></Glyph></FrameButton>
          <FrameButton aria-label="还原"><Glyph size={9}><path d="M2 5H11V14H2ZM5 5V2H14V11H11" strokeWidth="1.500" /></Glyph></FrameButton>
          <FrameButton aria-label="关闭"><Glyph size={9}><path d="M2 2L14 14M14 2L2 14" strokeWidth="1.700" /></Glyph></FrameButton>
        </TitleSide>
      </TitleBar>

      <TabRow>
        {tabs.map((t) => <Tab key={t} $active={t === "设计"}>{t}</Tab>)}
        <TabActions>
          <ActionButton><Glyph size={10}><circle cx="8" cy="8" r="6.500" strokeWidth="1.500" /><circle cx="8" cy="8" r="3" fill={F} /></Glyph>录制</ActionButton>
          <ActionButton aria-label="批注"><Glyph size={9}><path d="M1.500 2.500H14.500V11H8L5 14V11H1.500Z" strokeWidth="1.500" /></Glyph></ActionButton>
          <ActionButton $primary><Glyph size={9}><path d="M5 6H2V14.500H12V11M6 11Q6 6 11 6V9L15 5 11 1.500V4" strokeWidth="1.500" /></Glyph>共享<Caret size={6} /></ActionButton>
        </TabActions>
      </TabRow>

      <RibbonCard>
        <RibbonGroups>
          <Group $pad={0} style={{ paddingRight: 7 }}>
            <Gallery>
              {themes.map((t, i) => <ThemeThumb key={i} theme={t} selected={i === 0} sample />)}
              <GalleryPager />
            </Gallery>
            <GroupName>主题</GroupName>
          </Group>
          <Group>
            <Gallery>
              {variants.map((t, i) => <ThemeThumb key={i} theme={t} selected={i === 0} />)}
              <GalleryPager />
            </Gallery>
            <GroupName>变体</GroupName>
          </Group>
          <Group $pad={4}>
            <BigRow>
              <BigButton>
                <Glyph size={22}><path d="M1 2H15M1 4V14M1 2V14" stroke="#4f9bd8" strokeWidth=".8" /><path d="M3.500 4H14.500V13H3.500Z" fill="#f7f7f7" stroke="#666" strokeWidth="1" /></Glyph>
                <span>幻灯片</span>
                <span>大小<Caret size={6} /></span>
              </BigButton>
              <BigButton>
                <Glyph size={22}><path d="M4.500 5V1.500H10.500L13.500 4.500V14.500H4.500V12M10.500 1.500V4.500H13.500" strokeWidth=".8" /><path d="M2.500 8.500L6 5 9.500 8.500 6 12Z" fill="#fff" strokeWidth=".8" /><path d="M4 7V3.500" strokeWidth=".8" /><path d="M9.500 8Q12 10 10.500 11.500" stroke="#2b7cc0" /></Glyph>
                <span>设置背</span>
                <span>景格式</span>
              </BigButton>
            </BigRow>
            <GroupName>自定义</GroupName>
          </Group>
          <Group $pad={5}>
            <BigRow>
              <BigButton>
                <Glyph size={22}><path d="M5 3.500H15V14H3V9M5 6.500H15M11 6.500V14" stroke="#666" strokeWidth="1" /><path d="M4 1H7.500L5.500 4.500H8L2 11 3.500 6.500H1.500Z" fill="#ffd27a" stroke="#e08a1c" strokeWidth=".8" /></Glyph>
                <span>设</span>
                <span>计器</span>
              </BigButton>
            </BigRow>
            <GroupName>设计器</GroupName>
          </Group>
          <Collapse aria-label="折叠功能区"><Caret /></Collapse>
        </RibbonGroups>
        <QuickBar>
          <QuickGroup $width={324}>
            {quick.map((q, i) => <QuickButton key={i}><Glyph>{q}</Glyph></QuickButton>)}
          </QuickGroup>
          <QuickSpins>
            <Spin width={48} height={16} fill="#f1f1f1" label="高度" />
            <Spin width={48} height={16} fill="#f1f1f1" label="宽度" />
          </QuickSpins>
          <QuickGroup $width={199}>
            {quickB.map((q, i) => (
              <QuickButton key={i} $dark={q.dark}><Glyph>{q.art}</Glyph>{q.caret && <Caret size={5} />}</QuickButton>
            ))}
          </QuickGroup>
        </QuickBar>
      </RibbonCard>

      <Workspace>
        <Thumbs>
          <ol>
            {slides.map((s, i) => (
              <ThumbItem key={i} $selected={i === 6}>
                <span>{i + 1}</span>
                <ThumbFrame $selected={i === 6} aria-label={`幻灯片 ${i + 1}`}>
                  {s && <svg width="104" height="60" viewBox="0 0 106 61" preserveAspectRatio="none">{s}</svg>}
                </ThumbFrame>
              </ThumbItem>
            ))}
          </ol>
        </Thumbs>
        <Editor>
          <Stage>
            <Slide />
            <ScrollTrack>
              <button aria-label="向上滚动"><Glyph size={8}><path d="M3 11L8 4 13 11Z" fill={F} /></Glyph></button>
              <div>
                <ScrollThumb />
                <button aria-label="向下滚动"><Glyph size={8}><path d="M3 5L8 12 13 5Z" fill={F} /></Glyph></button>
                <button aria-label="上一张"><Glyph size={9}><path d="M3 7L8 2 13 7ZM3 12L8 7 13 12ZM5 14H11" fill={F} /></Glyph></button>
                <button aria-label="下一张"><Glyph size={9}><path d="M3 9L8 14 13 9ZM3 4L8 9 13 4ZM5 2H11" fill={F} /></Glyph></button>
              </div>
            </ScrollTrack>
          </Stage>
          <Notes>单击此处添加备注</Notes>
        </Editor>
        <Pane>
          <PaneTitle>设计工具</PaneTitle>
          <PaneActions>
            <button aria-label="设置"><Glyph size={12}><path d="M4.500 2H11.500L15 8 11.500 14H4.500L1 8Z" strokeWidth="1.300" /><circle cx="8" cy="8" r="1.500" /></Glyph></button>
            <button aria-label="帮助"><Glyph size={12}><circle cx="8" cy="8" r="7" strokeWidth="1.300" /><path d="M6 6.500A2 2 0 1 1 8.800 8.200Q8 8.600 8 10M8 11V12.500" strokeWidth="1.500" /></Glyph></button>
            <button aria-label="关闭"><Glyph size={12}><path d="M4 4L12 12M12 4L4 12" strokeWidth="1.300" /></Glyph></button>
          </PaneActions>
          <ToolGrid>
            {groups.map((grp) => (
              <ToolCell key={grp.title}>
                <h3>{grp.title}</h3>
                <IconGrid>
                  {grp.icons.map((name, i) =>
                    name ? (
                      <ToolButton key={i} aria-label={`${grp.title} ${i + 1}`} $tone={grp.reds?.includes(name) ? red : grp.tone}>
                        <Glyph size={13}>{g[name]}</Glyph>
                      </ToolButton>
                    ) : <span key={i} />
                  )}
                </IconGrid>
              </ToolCell>
            ))}
            <ToolCell $wide>
              <h3>文本框</h3>
              <Options>
                <label><Choice type="radio" name="fit" disabled />自由调整</label>
                <label><Choice type="radio" name="fit" disabled defaultChecked />根据文字</label>
                <label><Choice type="radio" name="fit" disabled />溢出缩排</label>
                <label><Choice type="checkbox" $square disabled defaultChecked />自动换行</label>
              </Options>
            </ToolCell>
            <ToolCell $wide>
              <MarginHead>
                <h3>文本框边距</h3>
                <button aria-label="清除"><Glyph size={11}><path d="M1 3.500H15M3 3.500V15H13V3.500M5 3.500V1H11V3.500M6 7V12M8 7V12M10 7V12" /></Glyph></button>
                <button aria-label="重置"><Glyph size={11}><path d="M14 8A6 6 0 1 1 11.500 3M14.500 1V5H10.500" strokeWidth="1.400" /></Glyph></button>
              </MarginHead>
              <Margins>
                {(["gl", "gr", "gt", "gb"] as const).map((n, i) => (
                  <label key={n}><Glyph size={10}>{g[n]}</Glyph><Spin width={61} height={18} label={["左", "右", "上", "下"][i]} /></label>
                ))}
              </Margins>
            </ToolCell>
          </ToolGrid>
        </Pane>
      </Workspace>

      <StatusBar>
        <span>幻灯片 第 7 张，共 7 张</span>
        <StatusItem $gap={15} aria-label="拼写"><Glyph size={10}><path d="M8 3Q5 1.500 1.500 2.500V13Q5 12 8 14Q11 12 14.500 13V2.500Q11 1.500 8 3ZM8 3V14" strokeWidth="1.400" /></Glyph></StatusItem>
        <StatusItem $gap={11}>中文(中国)</StatusItem>
        <StatusItem $gap={13}><Glyph size={11}><circle cx="7" cy="2.500" r="1.500" /><path d="M1.500 5L5 6.500V9L3 14.500M13 5L9 6.500V9M7 9L5 14M9 9L15 15M15 9L9 15" strokeWidth="1.400" /></Glyph>辅助功能: 调查</StatusItem>
        <StatusTools>
          <StatusItem $gap={0}><Glyph size={11}><path d="M1 8H15M1 12H15M1 15.300H15M5 5L8 2 11 5" strokeWidth="1.400" /></Glyph>备注</StatusItem>
          <ViewButton $active aria-label="普通视图"><Glyph size={11}><path d="M1 2H15V14H1ZM4 2V14M6.500 5H12.500V9H6.500ZM6.500 11.500H12.500" /></Glyph></ViewButton>
          <ViewButton aria-label="浏览"><Glyph size={11}><path d="M1.500 2H6.500V6.500H1.500ZM9.500 2H14.500V6.500H9.500ZM1.500 9.500H6.500V14H1.500ZM9.500 9.500H14.500V14H9.500Z" /></Glyph></ViewButton>
          <ViewButton aria-label="阅读"><Glyph size={11}><path d="M8 3Q5 1.500 1.500 2.500V13Q5 12 8 14Q11 12 14.500 13V2.500Q11 1.500 8 3ZM8 3V14M3 5H6M3 8H6M10 5H13M10 8H13" strokeWidth="1.300" /></Glyph></ViewButton>
          <ViewButton aria-label="放映"><Glyph size={11}><path d="M1 2H15M2.500 2V9H13.500V2M8 9V14M5 14.500H11" strokeWidth="1.300" /></Glyph></ViewButton>
          <StatusItem $gap={4} aria-label="缩小"><Glyph size={8}><path d="M2 8H14" strokeWidth="1.600" /></Glyph></StatusItem>
          <Zoom type="range" min="10" max="190" defaultValue="87" aria-label="缩放" />
          <button aria-label="放大"><Glyph size={8}><path d="M2 8H14M8 2V14" strokeWidth="1.600" /></Glyph></button>
          <StatusItem $gap={7}>87%</StatusItem>
          <StatusItem $gap={8} aria-label="适应窗口"><Glyph size={11}><path d="M5 5H11V11H5ZM6 3L8 1 10 3M6 13L8 15 10 13M3 6L1 8 3 10M13 6L15 8 13 10" strokeWidth="1.400" /></Glyph></StatusItem>
        </StatusTools>
      </StatusBar>
      <Desktop>
        <DesktopBand $width={190} $tone="#fff" $gap={403} />
        <DesktopBand $width={78} $tone="#f8f2ef" />
        <Clock>16:46</Clock>
      </Desktop>

      <Pointer width="90" height="40" viewBox="0 0 90 40">
        <defs>
          <linearGradient id="beam" x1="0" y1="0" x2="0" y2="1">
            <stop offset="0" stopColor="#d5181c" />
            <stop offset="1" stopColor="#f0b0a6" stopOpacity=".6" />
          </linearGradient>
        </defs>
        <path d="M25 0L9 38H82L72 25Z" fill="url(#beam)" />
      </Pointer>
      <Lens>
        <LensTabs><span>插入</span><span>设计</span><span>切换</span></LensTabs>
        <LensGallery>
          <LensCard $width={15} $bg="#fff" />
          <LensCard $width={74} $bg="linear-gradient(transparent 36px,#7c6242 36px),linear-gradient(100deg,#d5cfce,#f1eeed)">
            <span>文<b style={{ fontWeight: 500 }}>文</b></span>
            <LensSwatches>{themes[2].colors.map((c) => <i key={c} style={{ background: c }} />)}</LensSwatches>
          </LensCard>
          <LensCard $width={74} $bg="linear-gradient(transparent 19px,#222 19px,#222 22px,transparent 22px),#f0c27c">
            <b>文</b>
          </LensCard>
        </LensGallery>
      </Lens>

      <ImeBar>
        <svg width="22" height="22" viewBox="0 0 22 22">
          <path d="M1 4L17 1Q19 1 19 3L21 17Q21 19 19 19L5 21Q3 21 3 19Z" fill="#e4552d" />
          <path d="M16 6Q6 4 6 8.500Q6 11 11 11Q16 11 15.500 14Q15 17.500 6 16" fill="none" stroke="#fff" strokeWidth="2.800" />
        </svg>
        <button>英</button>
        <button aria-label="标点"><Glyph size={12}><circle cx="4" cy="5" r="1.500" fill={F} /><path d="M12 9V11L10.500 13" strokeWidth="2.500" /></Glyph></button>
        <button aria-label="语音"><Glyph size={12}><path d="M6 2H10V9H6Z" fill={F} strokeLinejoin="round" strokeWidth="2" /><path d="M3 7Q3 12 8 12T13 7M8 12V15" strokeWidth="1.500" /></Glyph></button>
        <button aria-label="键盘"><Glyph size={12}><path d="M1 3H15V13H1Z" strokeWidth="1.600" /><path d="M3 6H13M3 8.500H13M5 11H11" strokeDasharray="2 1" strokeWidth="1.500" /></Glyph></button>
        <button aria-label="皮肤"><Glyph size={12}><path d="M5 2Q8 5 11 2L15 4 14 8H12V15H4V8H2L1 4Z" fill={F} /></Glyph></button>
        <button aria-label="助手"><Glyph size={12}><ellipse cx="8" cy="9.500" rx="7" ry="5" fill={F} /><path d="M8 2V5" strokeWidth="3" /><path d="M5.500 8V11M10.500 8V11" stroke="#fff" strokeWidth="1.500" /></Glyph></button>
        <button aria-label="工具箱"><Glyph size={12}><path d="M2 2H7V7H2ZM9 2H14V7H9ZM2 9H7V14H2ZM9 9H14V14H9Z" fill={F} stroke="none" /></Glyph></button>
        <button aria-label="设置"><Glyph size={12}><circle cx="8" cy="8" r="4" strokeWidth="3" /><path d="M8 1V4M8 12V15M2 4.500L4.500 6M11.500 10L14 11.500M14 4.500L11.500 6M4.500 10L2 11.500" strokeWidth="2.200" /></Glyph></button>
      </ImeBar>
      <SideWidget />
    </Window>
  );
}
